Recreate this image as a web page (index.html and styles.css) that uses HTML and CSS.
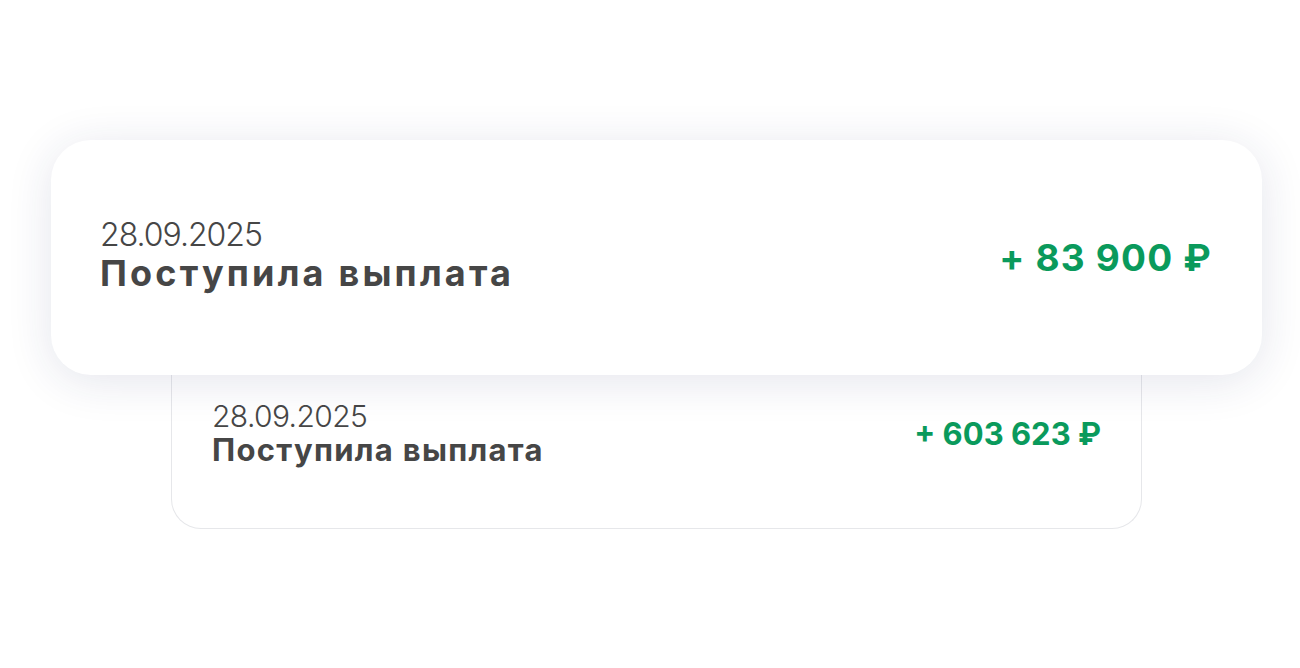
FILE: index.html
```html
<!DOCTYPE html>
<html lang="ru">
<head>
<meta charset="utf-8">
<title>Выплаты</title>
<link rel="stylesheet" href="styles.css">
</head>
<body>
<div class="stack">
  <div class="card card-front">
    <div class="info">
      <div class="date">28.09.2025</div>
      <div class="title">Поступила выплата</div>
    </div>
    <div class="amount">+ 83 900 ₽</div>
  </div>
  <div class="card card-back">
    <div class="info">
      <div class="date">28.09.2025</div>
      <div class="title">Поступила выплата</div>
    </div>
    <div class="amount">+ 603 623 ₽</div>
  </div>
</div>
</body>
</html>
```

FILE: styles.css
```css
html, body {
  margin: 0;
  padding: 0;
  background: #ffffff;
}
body {
  width: 1300px;
  height: 668px;
  overflow: hidden;
  font-family: Inter, "Noto Sans", sans-serif;
  color: #464646;
}
.stack {
  display: flex;
  flex-direction: column;
  align-items: flex-start;
  padding: 140px 0 0 51px;
}
.card {
  display: flex;
  align-items: center;
  justify-content: space-between;
  background: #ffffff;
  box-sizing: border-box;
}
.card-front {
  position: relative;
  z-index: 1;
  width: 1211px;
  height: 235px;
  border-radius: 40px;
  padding: 0 50px 0 49px;
  box-shadow: 0 6px 46px rgba(35, 45, 100, 0.12);
}
.card-back {
  width: 971px;
  height: 154px;
  margin-left: 120px;
  border: 1px solid #e6e7ea;
  border-top: none;
  border-radius: 0 0 30px 30px;
  padding: 0 40px 36px 40px;
}
.info {
  display: flex;
  flex-direction: column;
}
.date {
  font-weight: 300;
}
.title {
  font-weight: 700;
}
.amount {
  font-weight: 700;
  color: #0a9a5c;
}
.card-front .info {
  padding-bottom: 6px;
}
.card-front .date {
  font-size: 32px;
  line-height: 36px;
  letter-spacing: -1px;
}
.card-front .title {
  font-size: 36px;
  line-height: 40px;
  letter-spacing: 3.2px;
}
.card-front .amount {
  font-size: 37px;
  letter-spacing: 1.2px;
}
.card-back .date {
  font-size: 30px;
  line-height: 32px;
  letter-spacing: -0.6px;
}
.card-back .title {
  font-size: 31px;
  line-height: 36px;
  letter-spacing: 1.3px;
}
.card-back .amount {
  font-size: 31px;
}
```
